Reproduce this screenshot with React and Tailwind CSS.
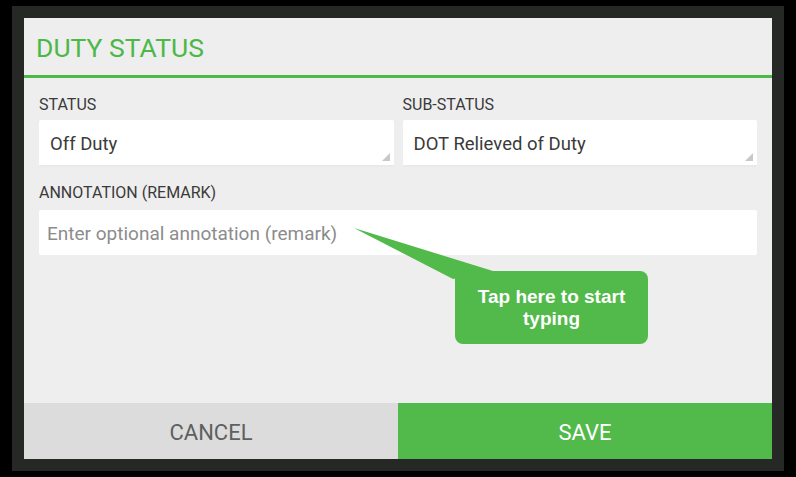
import React from 'react'

function Spinner({ value }) {
  return (
    <div className="relative h-[47px] bg-white rounded-[2px] flex items-center px-[11px] pt-[5px] border-b-2 border-[#e6ebe8]">
      <span className="text-[18.5px] text-[#3a3a3a]">{value}</span>
      <svg className="absolute right-[4px] bottom-[4px]" width="8" height="8" viewBox="0 0 8 8">
        <path d="M8 0 L8 8 L0 8 Z" fill="#c8c8c8" />
      </svg>
    </div>
  )
}

export default function App() {
  return (
    <div className="w-[796px] h-[477px] bg-black pt-[6px] pl-[12px] font-['Roboto',sans-serif]">
      <div className="relative w-[772px] h-[465px] bg-[#262826] p-[12px]">
        <div className="w-[748px] h-[441px] bg-[#eeeeee] flex flex-col">
          {/* header */}
          <div className="h-[60px] flex items-center px-[12px] border-b-[3px] border-[#4cb848]">
            <h1 className="text-[26.5px] text-[#4cb848] pt-[2px]">DUTY STATUS</h1>
          </div>

          {/* form */}
          <div className="flex-1 px-[15px] pt-[17px]">
            <div className="grid grid-cols-2 gap-x-[9px]">
              <div>
                <div className="text-[16px] text-[#3a3a3a] leading-[20px] mb-[5px]">STATUS</div>
                <Spinner value="Off Duty" />
              </div>
              <div>
                <div className="text-[16px] text-[#3a3a3a] leading-[20px] mb-[5px]">SUB-STATUS</div>
                <Spinner value="DOT Relieved of Duty" />
              </div>
            </div>
            <div className="text-[16px] text-[#3a3a3a] leading-[20px] mt-[16px] mb-[7px]">ANNOTATION (REMARK)</div>
            <div className="h-[45px] bg-white rounded-[2px] flex items-center px-[8px] pt-[3px]">
              <span className="text-[19px] text-[#8c8c8c]">Enter optional annotation (remark)</span>
            </div>
          </div>

          {/* buttons */}
          <div className="h-[56px] flex">
            <div className="w-[374px] bg-[#dcdcdc] flex items-center justify-center text-[22px] text-[#5f5f5f] pt-[2px]">CANCEL</div>
            <div className="flex-1 bg-[#52b94b] flex items-center justify-center text-[22px] text-white pt-[2px]">SAVE</div>
          </div>
        </div>

        {/* tooltip */}
        <div className="absolute left-[342px] top-[222px] w-[294px] h-[116px]">
          <svg className="absolute left-0 top-0" width="294" height="116" viewBox="0 0 294 116">
            <path d="M0 0 L139 43 L99 51 Z" fill="#52b94b" />
          </svg>
          <div className="absolute left-[101px] top-[43px] w-[193px] h-[73px] rounded-[8px] bg-[#52b94b] flex items-center justify-center text-center text-white font-bold text-[19px] leading-[22px] font-['Liberation_Sans',sans-serif] px-[8px]">
            Tap here to start typing
          </div>
        </div>
      </div>
    </div>
  )
}
